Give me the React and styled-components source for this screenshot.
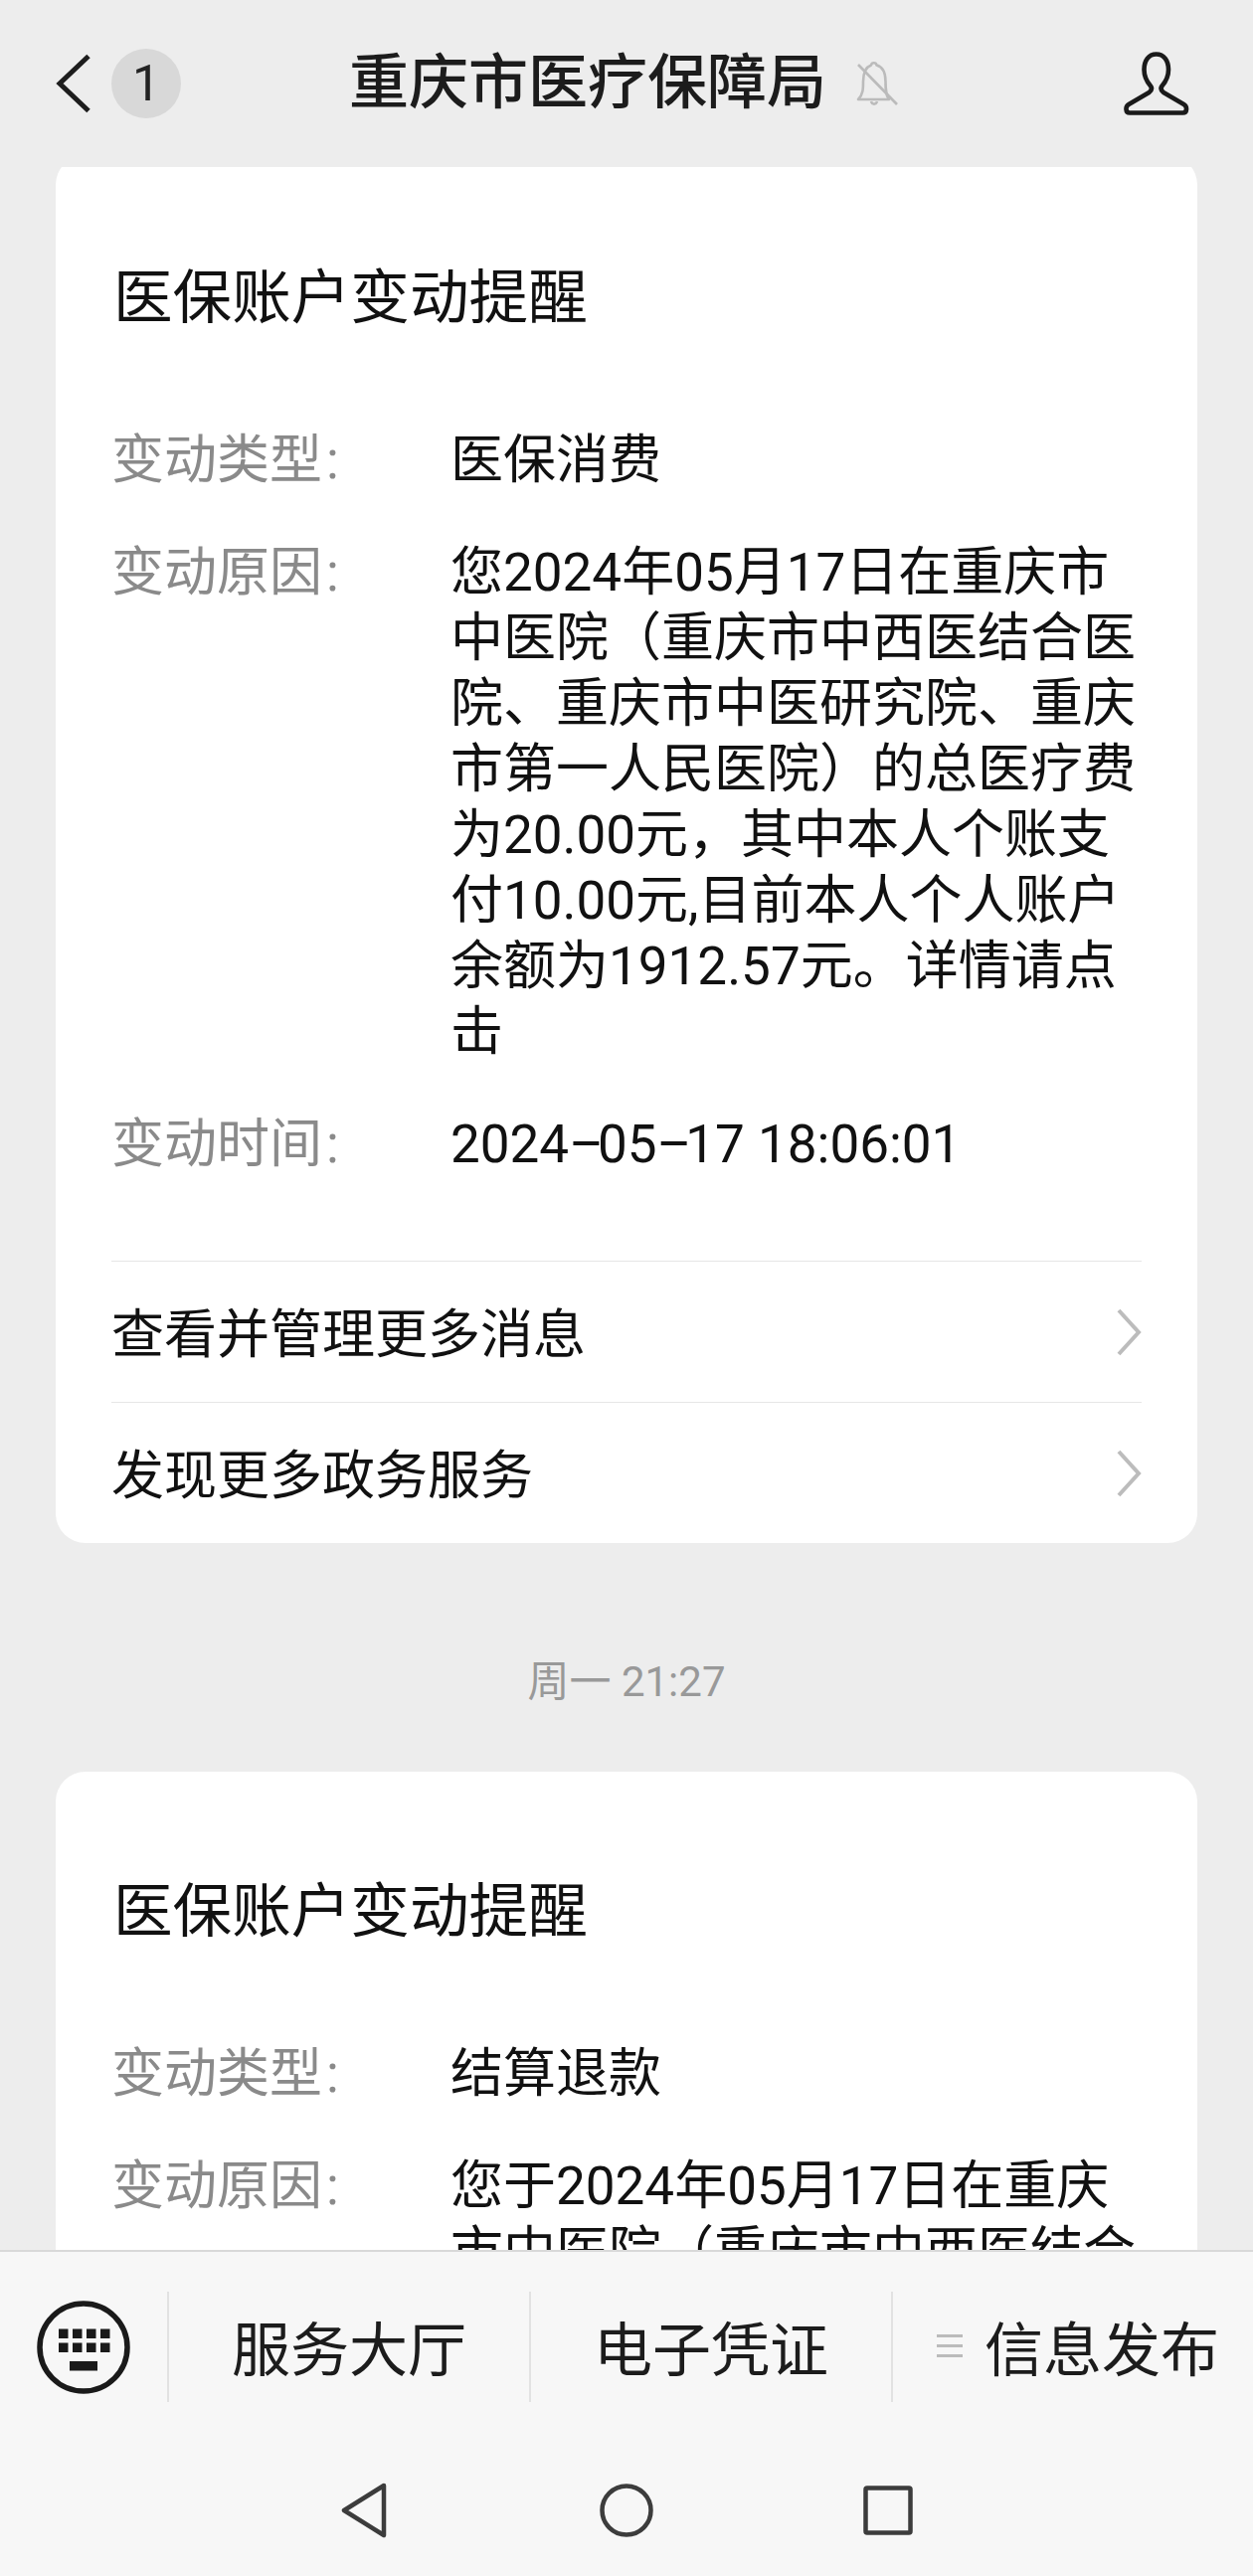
import React from 'react';
import styled, { createGlobalStyle } from 'styled-components';

const Global = createGlobalStyle`
  html, body { margin: 0; padding: 0; background: #ededed; }
  body { font-family: Roboto, "Noto Sans CJK SC", sans-serif; }
`;

const Page = styled.div`
  width: 1260px;
  height: 2591px;
  display: flex;
  flex-direction: column;
  overflow: hidden;
  background: #ededed;
`;

const Header = styled.header`
  flex: none;
  height: 168px;
  display: flex;
  align-items: center;
  padding: 0 64px 0 56px;
  box-sizing: border-box;
`;

const Back = styled.div`
  display: flex;
  align-items: center;
  gap: 20px;
`;

const Badge = styled.div`
  width: 70px;
  height: 70px;
  border-radius: 50%;
  background: #d8d8d8;
  color: #222;
  font-size: 50px;
  line-height: 70px;
  text-align: center;
`;

const TitleGroup = styled.div`
  display: flex;
  align-items: center;
  gap: 30px;
  margin-left: 169px;
`;

const Title = styled.h1`
  margin: 0;
  font-size: 60px;
  line-height: 80px;
  font-weight: 500;
  color: #1c1c1c;
`;

const Person = styled.svg`
  margin-left: auto;
  display: block;
`;

const Messages = styled.main`
  flex: 1;
  min-height: 0;
  overflow: hidden;
  padding: 0 56px;
`;

const Card = styled.section`
  background: #fff;
  border-radius: 30px;
  padding: ${p => p.$top}px 56px 0;
  margin-top: ${p => p.$shift}px;
`;

const CardTitle = styled.h2`
  margin: 0 0 90px;
  font-size: 59.6px;
  line-height: 80px;
  font-weight: 400;
  color: #111;
  padding-left: 2px;
`;

const Row = styled.div`
  display: grid;
  grid-template-columns: 341px 1fr;
  margin-bottom: 47px;
  font-size: 53px;
  line-height: 66px;
`;

const Label = styled.div`
  color: #8a8a8a;
`;

const Colon = styled.span`
  margin-left: 4px;
`;

const Value = styled.div`
  color: #111;
  white-space: nowrap;
`;

const Dash = styled.span`
  letter-spacing: -6px;
`;

const Links = styled.div`
  margin-top: 84px;
`;

const LinkRow = styled.div`
  height: 141px;
  border-top: 1px solid #e6e6e6;
  display: flex;
  align-items: center;
  justify-content: space-between;
  font-size: 53px;
  color: #111;
`;

const LinkText = styled.span`
  padding-bottom: 3px;
`;

const Time = styled.div`
  margin: 110px 0 60px;
  text-align: center;
  font-size: 42px;
  line-height: 60px;
  color: #999;
`;

const Bottom = styled.footer`
  flex: none;
  height: 328px;
  box-sizing: border-box;
  border-top: 2px solid #d9d9d9;
  background: #f7f7f7;
`;

const Tabs = styled.div`
  display: grid;
  grid-template-columns: 168px 364px 364px 1fr;
  height: 111px;
  margin-top: 40px;
`;

const Keyboard = styled.div`
  display: flex;
  align-items: center;
  justify-content: center;
`;

const Tab = styled.div`
  display: flex;
  align-items: center;
  justify-content: center;
  gap: 22px;
  border-left: 2px solid #e2e2e2;
  padding-left: ${p => p.$inset || 0}px;
  padding-bottom: 2px;
  font-size: 59px;
  color: #1c1c1c;
  white-space: nowrap;
`;

const MenuMark = styled.span`
  width: 26px;
  display: flex;
  flex-direction: column;
  gap: 6.5px;
`;

const MenuBar = styled.i`
  display: block;
  height: 3.5px;
  background: #bbb;
`;

const SysNav = styled.nav`
  display: grid;
  grid-template-columns: repeat(3, 263px);
  justify-content: center;
  justify-items: center;
  align-items: center;
  height: 56px;
  margin-top: 81px;
`;

const rows1 = [
  '您2024年05月17日在重庆市',
  '中医院（重庆市中西医结合医',
  '院、重庆市中医研究院、重庆',
  '市第一人民医院）的总医疗费',
  '为20.00元，其中本人个账支',
  '付10.00元,目前本人个人账户',
  '余额为1912.57元。详情请点',
  '击',
];

const rows2 = ['您于2024年05月17日在重庆', '市中医院（重庆市中西医结合'];

const Lines = ({ items }) => items.map((t, i) => <div key={i}>{t}</div>);

const Field = ({ label, children }) => (
  <Row>
    <Label>{label}<Colon>:</Colon></Label>
    <Value>{children}</Value>
  </Row>
);

const Chevron = () => (
  <svg width="26" height="48" viewBox="0 0 26 48" fill="none">
    <polyline points="3,2 23,24 3,46" stroke="#bcbcbc" strokeWidth="4" />
  </svg>
);

export default function App() {
  return (
    <Page>
      <Global />
      <Header>
        <Back>
          <svg width="36" height="60" viewBox="0 0 36 60" fill="none">
            <polyline points="33,2.5 4,30 33,57.5" stroke="#1d1d1d" strokeWidth="5" />
          </svg>
          <Badge>1</Badge>
        </Back>
        <TitleGroup>
          <Title>重庆市医疗保障局</Title>
          <svg width="42" height="46" viewBox="0 0 42 46" fill="none" stroke="#bbb" strokeWidth="2.6">
            <path d="M2 39 C7 34 7 28 7 21 C7 11 11 6 15 4.5 C15.5 1.5 20 1.5 20.5 4.5 C26 6 29.5 11 29.5 21 C29.5 28 29.5 34 33 39 Z" strokeLinejoin="round" />
            <path d="M15 41 C16 44.5 20 44.5 21 41" />
            <line x1="2" y1="4" x2="41" y2="44" />
          </svg>
        </TitleGroup>
        <Person width="66" height="64" viewBox="0 0 66 64" fill="none">
          <path
            d="M32.7 2.5 C25 2.5 20.5 9 20.5 18 C20.5 25 24 31 27 34.5 C28.5 36.5 28 39 25.5 41 L5 53 C1.5 55 1.5 61.5 6 61.5 L59.5 61.5 C64 61.5 64 55 60.5 53 L40 41 C37.5 39 37 36.5 38.5 34.5 C41.5 31 45 25 45 18 C45 9 40.5 2.5 32.7 2.5 Z"
            stroke="#1a1a1a"
            strokeWidth="4.6"
            strokeLinejoin="round"
          />
        </Person>
      </Header>

      <Messages>
        <Card $top={104} $shift={-12}>
          <CardTitle>医保账户变动提醒</CardTitle>
          <Field label="变动类型">医保消费</Field>
          <Field label="变动原因"><Lines items={rows1} /></Field>
          <Field label="变动时间">2024<Dash>–</Dash>05<Dash>–</Dash>17 18:06:01</Field>
          <Links>
            <LinkRow><LinkText>查看并管理更多消息</LinkText><Chevron /></LinkRow>
            <LinkRow><LinkText>发现更多政务服务</LinkText><Chevron /></LinkRow>
          </Links>
        </Card>
        <Time>周一 21:27</Time>
        <Card $top={101} $shift={0}>
          <CardTitle>医保账户变动提醒</CardTitle>
          <Field label="变动类型">结算退款</Field>
          <Field label="变动原因"><Lines items={rows2} /></Field>
        </Card>
      </Messages>

      <Bottom>
        <Tabs>
          <Keyboard>
            <svg width="94" height="94" viewBox="0 0 94 94">
              <circle cx="47" cy="47" r="44" fill="none" stroke="#1a1a1a" strokeWidth="5.5" />
              {[0, 1].map(r => [0, 1, 2, 3].map(c => (
                <rect key={`${r}${c}`} x={22 + c * 14} y={28.5 + r * 14} width="9.5" height="9.5" fill="#1a1a1a" />
              )))}
              <rect x="33" y="61" width="28" height="9.5" fill="#1a1a1a" />
            </svg>
          </Keyboard>
          <Tab>服务大厅</Tab>
          <Tab>电子凭证</Tab>
          <Tab $inset={10}>
            <MenuMark><MenuBar /><MenuBar /><MenuBar /></MenuMark>
            信息发布
          </Tab>
        </Tabs>
        <SysNav>
          <svg width="48" height="56" viewBox="0 0 48 56" fill="none" stroke="#3c3c3c" strokeWidth="4.5" strokeLinejoin="round">
            <path d="M43 3 L3 28 L43 53 Z" />
          </svg>
          <svg width="56" height="56" viewBox="0 0 56 56" fill="none" stroke="#3c3c3c" strokeWidth="4.5">
            <circle cx="28" cy="28" r="24.5" />
          </svg>
          <svg width="50" height="50" viewBox="0 0 50 50" fill="none" stroke="#3c3c3c" strokeWidth="4.5" strokeLinejoin="round">
            <rect x="2.5" y="2.5" width="45" height="45" rx="1.5" />
          </svg>
        </SysNav>
      </Bottom>
    </Page>
  );
}
